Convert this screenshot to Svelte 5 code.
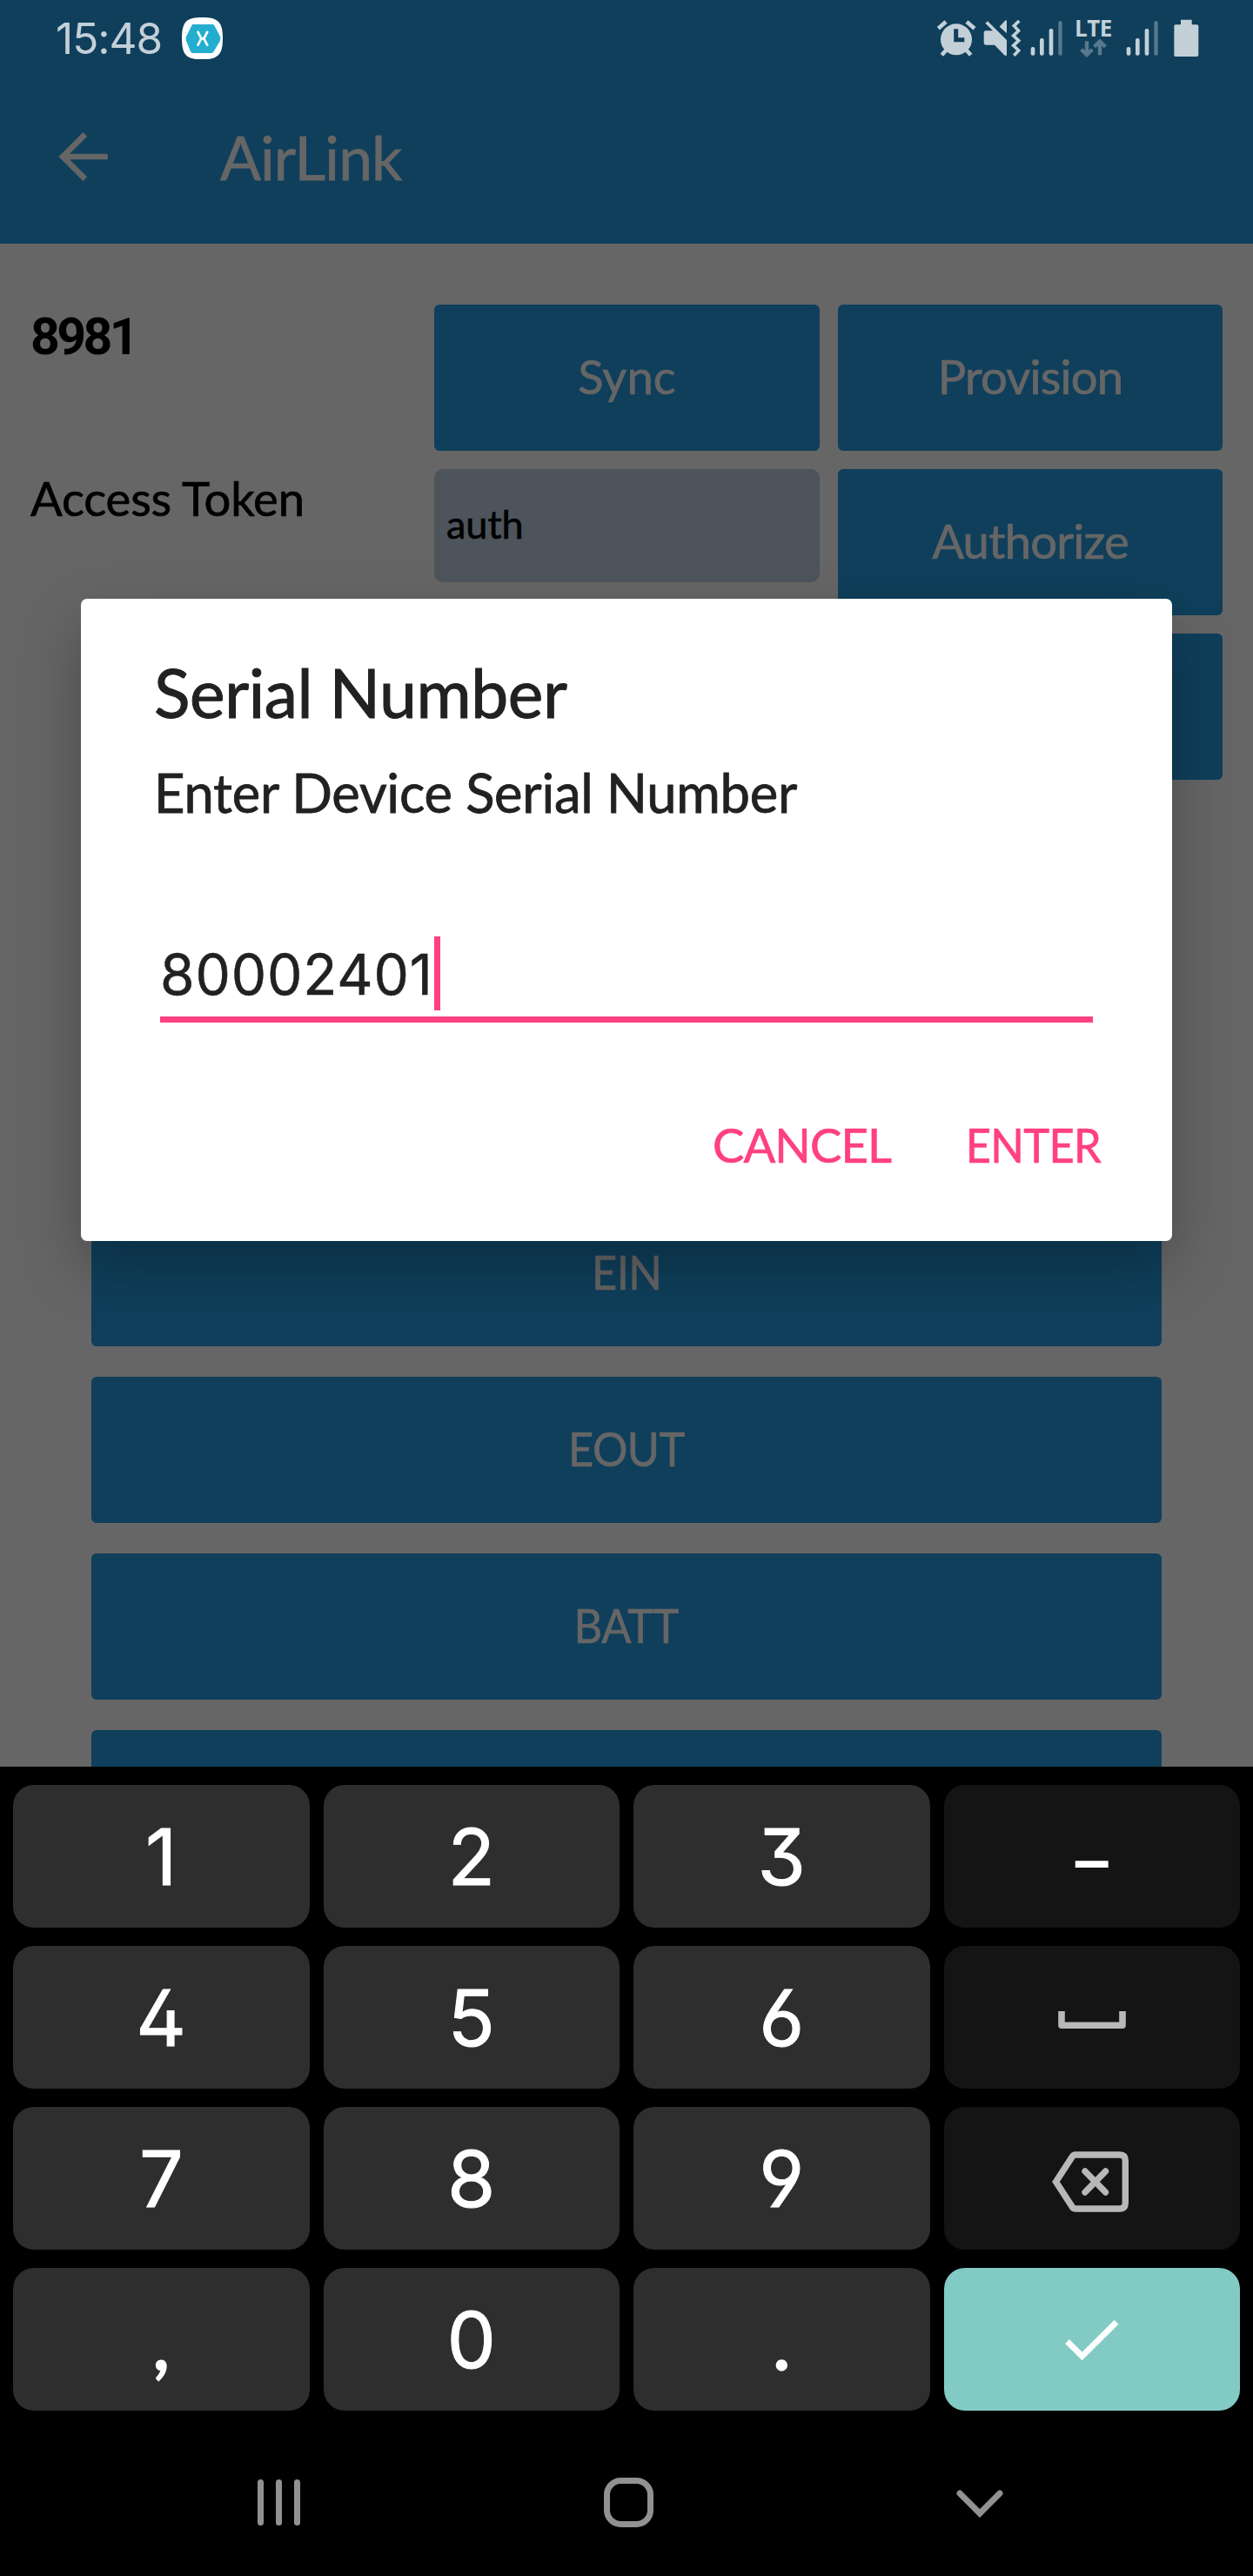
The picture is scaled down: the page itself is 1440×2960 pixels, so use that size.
<script>
  const channels = ['EIN', 'EOUT', 'BATT', ''];
  const keys = ['1', '2', '3', '–', '4', '5', '6', 'space', '7', '8', '9', 'back', ',', '0', '.', 'done'];
  const isSide = (k) => ['–', 'space', 'back'].includes(k);
  const isMark = (k) => [',', '.', '–'].includes(k);
</script>

{#snippet signal()}
  <svg class="signal" viewBox="0 0 111 120">
    <g fill="#c3d0d8">
      <rect x="2" y="90" width="14" height="29" rx="6" />
      <rect x="33" y="60" width="14" height="59" rx="6" />
      <rect x="65" y="27" width="14" height="92" rx="6" />
    </g>
    <rect x="97" y="0" width="13" height="119" rx="6" fill="#58788c" />
  </svg>
{/snippet}

<div class="phone">
  <div class="app">
    <header>
      <div class="status">
        <span class="time">15:48</span>
        <svg class="badge" viewBox="0 0 141 145">
          <path d="M70 0C125 0 141 16 141 72S125 145 70 145 0 129 0 72 16 0 70 0Z" fill="#fff" />
          <path d="M36 24H104Q109 24 112 28L132 66Q135 73 132 80L110 118Q107 123 102 123H38Q33 123 30 118L15 80Q12 73 15 66Z" fill="#23aed0" />
          <path d="M54 48L67 73 54 98M89 48L76 73 89 98M65 73H78" fill="none" stroke="#fff" stroke-width="8" />
        </svg>
        <span class="spring"></span>
        <svg class="alarm" viewBox="75 62 138 130">
          <g fill="none" stroke="#c3d0d8" stroke-width="14">
            <path d="M82 94L108 71M180 71L207 94M94 186L110 168M194 186L178 168" />
          </g>
          <circle cx="144" cy="132" r="54" fill="#c3d0d8" />
          <path d="M143 96V133H172" fill="none" stroke="#0f3f5b" stroke-width="15" />
        </svg>
        <svg class="mute" viewBox="237 62 129 130">
          <path d="M244 76L252 69 318 134V187H311L276 151H246Q239 151 239 144V109Q239 102 246 102H270Z" fill="#c3d0d8" />
          <path d="M318 66V111L293 88 312 67Z" fill="#c3d0d8" />
          <path d="M360 68L342 85 358 102 340 119 358 136 340 153 358 170 342 187" transform="translate(1 0)" fill="none" stroke="#c3d0d8" stroke-width="11" />
        </svg>
        {@render signal()}
        <span class="lte">
          <b>LTE</b>
          <svg viewBox="574 137 92 62">
            <path d="M598 144V190M579 172L598 191 617 172M643 192V146M624 163L643 144 662 163" fill="none" stroke="#58788c" stroke-width="13" />
          </svg>
        </span>
        {@render signal()}
        <svg class="battery" viewBox="896 62 87 130">
          <path d="M920 64H958V81H976Q981 81 981 86V185Q981 191 976 191H902Q897 191 897 185V86Q897 81 902 81H920Z" fill="#c3d0d8" />
        </svg>
      </div>
      <div class="toolbar">
        <svg class="arrow" viewBox="0 0 170 168">
          <path d="M170 84H20M92 7L15 84 92 161" fill="none" stroke="#666" stroke-width="20" />
        </svg>
        <h1>AirLink</h1>
      </div>
    </header>

    <main>
      <section class="top">
        <div class="label id">8981</div>
        <button><span class="sync">Sync</span></button>
        <button><span class="tight">Provision</span></button>
        <div class="label token"><span>Access Token</span></div>
        <div class="entry"><span>auth</span></div>
        <button><span class="tight">Authorize</span></button>
        <button class="third" aria-label="Action"></button>
      </section>
      <section class="channels">
        {#each channels as c}
          <button><span class="caps">{c}</span></button>
        {/each}
      </section>
    </main>

    <div class="dialog">
      <h2>Serial Number</h2>
      <p>Enter Device Serial Number</p>
      <div class="input"><span class="value">80002401</span><i></i></div>
      <div class="actions"><span class="cancel">CANCEL</span><span class="enter">ENTER</span></div>
    </div>
  </div>

  <div class="keyboard">
    {#each keys as k}
      <div class="key" class:side={isSide(k)} class:done={k === 'done'} class:mark={isMark(k)}>
        {#if k === 'space'}
          <svg class="space" viewBox="0 0 78 21"><path d="M4 1V17.2H74V1" fill="none" stroke="#b8b8b8" stroke-width="7.6" stroke-linejoin="round" /></svg>
        {:else if k === 'back'}
          <svg class="erase" viewBox="0 0 88 70">
            <g fill="none" stroke="#b8b8b8" stroke-width="7.4">
              <path d="M27 4H78Q84.300 4 84.300 11V59Q84.300 66 78 66H27Q24.500 66 23 63.500L4.500 35 23 6.500Q24.500 4 27 4Z" />
              <path d="M38 23L61.500 47M61.500 23L38 47" stroke-linecap="round" />
            </g>
          </svg>
        {:else if k === 'done'}
          <svg class="check" viewBox="0 0 62 47"><path d="M2.500 24.500L19.600 41.500 59 2.300" fill="none" stroke="#fff" stroke-width="6.800" /></svg>
        {:else}<span>{k}</span>{/if}
      </div>
    {/each}
  </div>

  <nav>
    <svg width="49" height="53" viewBox="0 0 49 53"><path d="M3.500 3.500V49.500M24.500 3.500V49.500M45.500 3.500V49.500" stroke="#919191" stroke-width="7" stroke-linecap="round" /></svg>
    <svg width="57" height="57" viewBox="0 0 57 57"><rect x="3.500" y="3.500" width="50" height="50" rx="16" fill="none" stroke="#919191" stroke-width="7" /></svg>
    <svg class="chev" width="54" height="32" viewBox="0 0 54 32"><path d="M4 4L27 27 50 4" fill="none" stroke="#919191" stroke-width="7" stroke-linecap="round" /></svg>
  </nav>
</div>

<style>
  :global(body) { margin: 0; background: #000; }
  .phone { width: 1440px; height: 2960px; overflow: hidden; background: #000; font-family: Lato, sans-serif; }
  svg { display: block; flex: none; }
  .app { position: relative; height: 2030px; overflow: hidden; background: #666; }

  header { height: 280px; background: #0f3f5b; color: #666; }
  .status { display: flex; height: 88px; padding: 0 62px 0 64px; box-sizing: border-box; align-items: center; color: #c3d0d8; }
  .time { font: 400 49.500px/86px Inter, sans-serif; letter-spacing: -1px; width: 145px; white-space: nowrap; }
  .badge { width: 47px; height: 48.300px; }
  .spring { flex: 1; }
  .alarm { width: 46px; height: 43.300px; margin-right: 8px; }
  .mute { width: 43px; height: 43.300px; margin-right: 11px; }
  .signal { width: 37px; height: 40px; }
  .lte { display: flex; flex-direction: column; align-items: center; width: 41px; height: 44px; margin: 0 17px 0 15px; }
  .lte b { font: 700 26px/20px "Open Sans", sans-serif; height: 23px; letter-spacing: -0.500px; }
  .lte svg { width: 30.700px; height: 20.700px; }
  .battery { width: 29px; height: 43.300px; margin-left: 18px; }
  .toolbar { display: flex; align-items: center; height: 192px; padding: 0 0 8px 67px; box-sizing: border-box; }
  .arrow { width: 57px; height: 56px; margin-right: 129px; margin-bottom: 1px; }
  h1 { margin: 0; font-weight: 400; font-size: 69.500px; line-height: 84px; letter-spacing: -0.900px; -webkit-text-stroke: 0.800px #666; }

  main { padding: 70px 35px 0; }
  .top { display: grid; grid-template-columns: 443px 443px 442px; grid-auto-rows: 168px; gap: 21px; height: 1029px; }
  button { display: flex; align-items: center; justify-content: center; width: 100%; height: 168px; margin: 0; padding: 0 0 4px; border: 0; border-radius: 6px; background: #0f3f5b; color: #666; font: 400 54.400px/66px Lato, sans-serif; -webkit-text-stroke: 0.700px #666; }
  .tight { letter-spacing: -0.800px; }
  .caps { transform: scaleX(0.930); letter-spacing: -0.600px; }
  .third { grid-column: 3; }
  .label { color: #000; font-size: 54.400px; line-height: 66px; white-space: nowrap; }
  .id { font: 700 59px/70px Roboto, sans-serif; padding-top: 2px; letter-spacing: -3.600px; }
  .token { letter-spacing: -0.150px; -webkit-text-stroke: 0.700px #000; }
  .entry { height: 130px; border-radius: 10px; background: #4d545b; color: #000; font-size: 45px; line-height: 126px; padding-left: 14px; -webkit-text-stroke: 0.600px #000; }
  .channels { display: flex; flex-direction: column; gap: 35px; padding: 0 70px; }

  .dialog { position: absolute; left: 93px; top: 688px; width: 1254px; height: 738px; box-sizing: border-box; padding: 61px 91px 0 84px; border-radius: 7px; background: #fff; color: #212121; box-shadow: 0 30px 70px rgba(0, 0, 0, 0.280); }
  h2 { margin: 0; font-weight: 400; font-size: 76.800px; line-height: 92px; letter-spacing: -0.400px; -webkit-text-stroke: 1px #212121; }
  p { margin: 32px 0 129px; font-size: 61.500px; line-height: 74px; letter-spacing: -0.250px; -webkit-text-stroke: 0.800px #212121; white-space: nowrap; }
  .input { display: flex; height: 85px; margin-left: 7px; padding-bottom: 7px; border-bottom: 7px solid #ff4081; font: 400 64px/87px Inter, sans-serif; letter-spacing: 0.900px; -webkit-text-stroke: 0.500px #212121; }
  .value { width: 315px; white-space: nowrap; }
  .input i { width: 7px; height: 85px; background: #ff4081; }
  .actions { display: flex; justify-content: flex-end; gap: 74px; margin: 107px -9px 0 0; color: #ff4081; font-size: 54.400px; line-height: 66px; -webkit-text-stroke: 0.700px #ff4081; }
  .cancel { letter-spacing: -0.900px; }
  .enter { letter-spacing: -0.700px; transform: scaleX(0.930); transform-origin: right; }

  .keyboard { display: grid; grid-template-columns: repeat(4, 1fr); grid-auto-rows: 164px; gap: 21px 16px; padding: 21px 15px 0; height: 720px; }
  .key { display: flex; align-items: center; justify-content: center; border-radius: 24px; background: #2e2e2e; color: #fff; font: 400 89.500px/108px Inter, sans-serif; font-feature-settings: "ss01" 1; -webkit-text-stroke: 1px #fff; }
  .key span { padding-top: 2px; }
  .mark { font-family: Lato, sans-serif; -webkit-text-stroke: 2px #fff; }
  .side { background: #141414; }
  .done { background: #82cbc4; }
  .space { width: 78px; height: 21px; margin-top: 5px; }
  .erase { width: 88px; height: 70px; margin: 7px 4px 0 0; }
  .check { width: 62px; height: 47px; margin-top: 3px; }

  nav { display: grid; grid-template-columns: repeat(3, 1fr); place-items: center; height: 169px; padding: 20px 113px 0 119px; }
  .chev { margin-top: 3px; }
</style>
